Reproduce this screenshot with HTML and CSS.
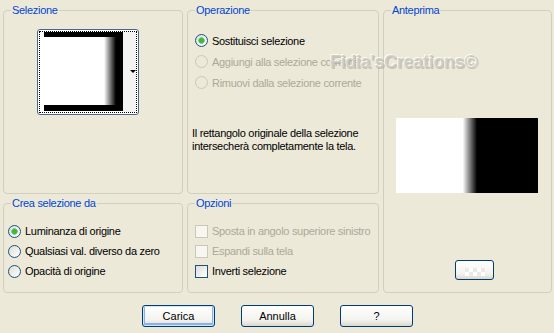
FILE: index.html
```html
<!DOCTYPE html>
<html lang="it">
<head>
    <meta charset="UTF-8">
    <title>Selezione da maschera</title>
    <link rel="stylesheet" href="styles.css">
</head>
<body>
    <div class="dialog">
        <div class="groups">
            <fieldset class="group sel">
                <legend>Selezione</legend>
                <div class="swatch">
                    <div class="swatch-focus">
                        <div class="thumb"></div>
                        <div class="swatch-drop"></div>
                    </div>
                </div>
            </fieldset>

            <fieldset class="group op">
                <legend>Operazione</legend>
                <div class="rows wide">
                    <label class="opt"><input type="radio" name="op" checked> Sostituisci selezione</label>
                    <label class="opt off"><input type="radio" name="op" disabled> Aggiungi alla selezione corrente</label>
                    <label class="opt off"><input type="radio" name="op" disabled> Rimuovi dalla selezione corrente</label>
                </div>
                <p class="note">Il rettangolo originale della selezione<br>intersecherà completamente la tela.</p>
            </fieldset>

            <fieldset class="group prev">
                <legend>Anteprima</legend>
                <div class="preview"></div>
                <button class="btn small" type="button"><span class="checker"></span></button>
            </fieldset>

            <fieldset class="group src">
                <legend>Crea selezione da</legend>
                <div class="rows">
                    <label class="opt"><input type="radio" name="src" checked> Luminanza di origine</label>
                    <label class="opt"><input type="radio" name="src"> Qualsiasi val. diverso da zero</label>
                    <label class="opt"><input type="radio" name="src"> Opacità di origine</label>
                </div>
            </fieldset>

            <fieldset class="group opts">
                <legend>Opzioni</legend>
                <div class="rows">
                    <label class="opt off"><input type="checkbox" disabled> Sposta in angolo superiore sinistro</label>
                    <label class="opt off"><input type="checkbox" disabled> Espandi sulla tela</label>
                    <label class="opt"><input type="checkbox"> Inverti selezione</label>
                </div>
            </fieldset>
        </div>

        <div class="buttons">
            <button class="btn default" type="button">Carica</button>
            <button class="btn" type="button">Annulla</button>
            <button class="btn" type="button">?</button>
        </div>

        <div class="watermark">Fidia'sCreations©</div>
    </div>
</body>
</html>
```

FILE: styles.css
```css
body {
    margin: 0;
    background: #ece9d8;
    font-family: "Liberation Sans", Arial, sans-serif;
    font-size: 11px;
    letter-spacing: -0.3px;
    color: #000;
}
.dialog {
    position: relative;
    width: 554px;
    height: 333px;
}
.groups {
    display: grid;
    grid-template-columns: 180px 192px 169px;
    grid-template-rows: 190px 96px;
    column-gap: 4px;
    row-gap: 3px;
    padding: 4px 0 0 3px;
}
.group {
    margin: 0;
    padding: 0;
    min-width: 0;
    border: 1px solid #d0d0bf;
    border-radius: 4px;
}
.group legend {
    margin-left: 7px;
    padding: 0 1px;
    line-height: 13px;
    color: #0046d5;
}

/* Selezione */
.swatch {
    width: 102px;
    height: 86px;
    margin: 12px 0 0 33px;
    box-sizing: border-box;
    border: 1px solid #46678f;
    border-radius: 3px;
    background: #fff;
    padding: 1px;
}
.swatch-focus {
    display: flex;
    height: 100%;
    box-sizing: border-box;
    border: 1px dotted #000;
    padding-left: 4px;
}
.thumb {
    width: 79px;
    height: 79px;
    background:
        linear-gradient(#000 0 5px, transparent 5px calc(100% - 6px), #000 calc(100% - 6px)),
        linear-gradient(to right, #fff 0 76%, #000 91%);
}
.swatch-drop {
    flex: 1;
    background: #f3f3f1;
}
.swatch-drop::after {
    content: "";
    display: block;
    width: 0;
    margin: 38px 0 0 7px;
    border: 3px solid transparent;
    border-bottom: 0;
    border-top-color: #000;
}

/* option rows */
.rows {
    padding: 11px 0 0 4px;
}
.rows .opt {
    height: 20px;
}
.wide {
    padding: 13px 0 0 7px;
}
.wide .opt {
    height: 21px;
}
.opt {
    display: flex;
    align-items: center;
    gap: 4px;
    white-space: nowrap;
}
.opt.off {
    color: #aca899;
}
.opt input {
    appearance: none;
    margin: 0;
    width: 13px;
    height: 13px;
    box-sizing: border-box;
    border: 1px solid #1c5180;
    background: linear-gradient(135deg, #dcdcd7, #fff);
    flex: none;
}
.opt input[type="radio"] {
    border-radius: 50%;
}
.opt input[type="radio"]:checked {
    background:
        radial-gradient(circle, #3cb83c 0 2px, #7ccc7c 3px, transparent 3.5px),
        linear-gradient(135deg, #dcdcd7, #fff);
}
.opt input:disabled {
    border-color: #cac8bb;
    background: #f7f6f1;
}
.opt input[type="radio"]:disabled {
    background: transparent;
}
.note {
    margin: 34px 0 0 4px;
    line-height: 13px;
}

/* Anteprima */
.prev {
    grid-column: 3;
    grid-row: 1 / 3;
}
.preview {
    width: 142px;
    height: 75px;
    margin: 101px 0 0 12px;
    background: linear-gradient(to right, #fff 0 47%, #000 57%);
}
.btn.small {
    display: block;
    width: 39px;
    height: 20px;
    margin: 67px 0 0 71px;
    padding: 0;
}
.checker {
    display: block;
    width: 20px;
    height: 8px;
    margin: 4px auto 0;
    background:
        conic-gradient(#fff 25%, transparent 0 50%, #fff 0 75%, transparent 0) 0 0 / 8px 8px,
        #eceae2;
}

/* Crea selezione da / Opzioni */
.src {
    grid-column: 1;
    grid-row: 2;
}
.opts {
    grid-column: 2;
    grid-row: 2;
}
.opts .rows {
    padding-left: 7px;
}

/* buttons */
.buttons {
    display: flex;
    justify-content: center;
    gap: 26px;
    margin-top: 12px;
    padding-left: 1px;
}
.btn {
    width: 73px;
    height: 22px;
    box-sizing: border-box;
    border: 1px solid #003c74;
    border-radius: 3px;
    background: linear-gradient(#fff, #f3f3ee 70%, #dcd8cc);
    font: inherit;
    color: #000;
    padding: 0;
}
.btn.default {
    box-shadow: inset 0 0 0 1px #cee7ff, inset 0 -1px 0 2px #8cb1ea;
}

.watermark {
    position: absolute;
    left: 330px;
    top: 52px;
    font-size: 18px;
    font-weight: bold;
    color: rgba(204, 200, 188, 0.85);
    text-shadow: -1px -1px 0 rgba(255, 255, 255, 0.8), 1px 1px 0 rgba(150, 146, 134, 0.45);
    pointer-events: none;
}
```
